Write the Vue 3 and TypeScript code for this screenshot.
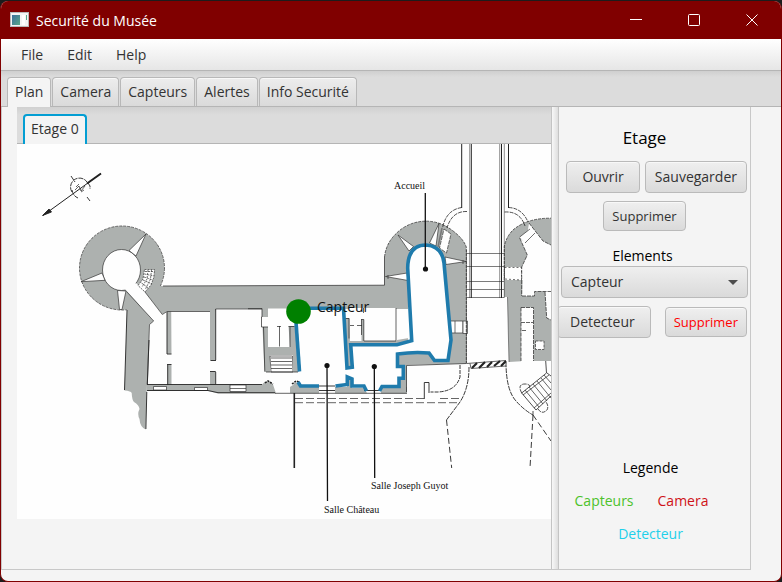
<script setup lang="ts">
import { ref } from 'vue'

const menus: string[] = ['File', 'Edit', 'Help']
const tabs: string[] = ['Plan', 'Camera', 'Capteurs', 'Alertes', 'Info Securité']
const activeTab = ref<string>('Plan')
const elements: string[] = ['Capteur', 'Camera', 'Detecteur']
const element = ref<string>('Capteur')
const passageSteps: number[] = [253, 266, 281, 289, 297]
</script>

<template>
  <div class="frame">
    <div class="window">
      <header class="titlebar">
        <svg class="app-icon" viewBox="0 0 19 16" aria-hidden="true">
          <defs>
            <linearGradient id="appIcon" x1="0" y1="0" x2="1" y2="1">
              <stop offset="0" stop-color="#3d6f9c" />
              <stop offset="1" stop-color="#57a888" />
            </linearGradient>
          </defs>
          <rect x="0.5" y="0.5" width="18" height="14" fill="#f4f4f4" stroke="#b9b9b9" />
          <rect x="2" y="3" width="8" height="10" fill="url(#appIcon)" />
          <rect x="12" y="3" width="3" height="10" fill="#fff" />
          <path d="M16 3h1v5h-1z" fill="#57a888" />
        </svg>
        <h1>Securité du Musée</h1>
        <button class="win-btn" aria-label="Réduire">
          <svg viewBox="0 0 14 14"><path d="M1 6.500h12" /></svg>
        </button>
        <button class="win-btn" aria-label="Agrandir">
          <svg viewBox="0 0 14 14"><rect x="1.500" y="1.500" width="11" height="11" rx="1" /></svg>
        </button>
        <button class="win-btn" aria-label="Fermer">
          <svg viewBox="0 0 14 14"><path d="M1.500 1.500l11 11M12.500 1.500l-11 11" /></svg>
        </button>
      </header>

      <nav class="menubar">
        <button v-for="m in menus" :key="m" class="menu">{{ m }}</button>
      </nav>

      <div class="tabs" role="tablist">
        <button
          v-for="t in tabs"
          :key="t"
          role="tab"
          class="tab"
          :class="{ active: t === activeTab }"
          :aria-selected="t === activeTab"
          @click="activeTab = t"
        >{{ t }}</button>
      </div>

      <main class="content">
        <div class="split">
          <section class="plan-pane">
            <div class="floors" role="tablist">
              <button role="tab" class="floor" aria-selected="true">Etage 0</button>
            </div>
            <svg class="plan" viewBox="17 144 534 375" role="img" aria-label="Plan Etage 0">
              <rect x="17" y="144" width="534" height="375" fill="#fefefe" />

              <!-- compass -->
              <g class="ink">
                <path d="M101 173.500L43 215.500" stroke-width="1" />
                <path d="M101 173.500L87 183.500" stroke-width="2" />
                <path d="M42.500 215.500L49 209L51.500 212z" fill="#222" />
                <path d="M72 192a9 9 0 0 1 2-12a9 9 0 0 1 13 2M72 190q1 6 6 8M71 176l4 6M87 197l3 4M88 183l2 3v3" stroke-dasharray="5 1" />
                <path d="M75 190l4-4l2 5l4-5M76 187l3-3M81 192l3-2" stroke-width="0.700" />
              </g>

              <!-- masonry -->
              <g class="wall">
                <ellipse cx="122" cy="268" rx="42.500" ry="42" stroke-dasharray="3 1" />
                <path class="plain" d="M127 290L127 310L124.500 390.500Q131 391 131.700 393Q132 400 134 402Q139 405 139.500 409Q137 414 139.500 419Q140 427 145.700 429.500L147 384L149.500 324.500L154 321L126 290z" />
                <path class="plain" d="M163 286L384.500 285.200V257Q386 243 396.700 233A42 42 0 0 1 451.700 230Q463 238 466.300 247V363.500L406.500 365V393.300H381V385H399V378H403V366H397V340L409 338V309H215.700V311.500H167L162.300 314.500L140 286z" />
                <path class="plain" d="M167 311h4.300l.4 42.700h-4.700zM167.700 364.700h4V385h-4zM210 309h5.700v51.300h-5.700zM210 371.500h5.700V385h-5.700z" />
                <path class="plain" d="M147 384.500H262l3-3h5l3 3l3 9H218l-10-2.500H147z" />
                <path class="plain" d="M290 393V387l3-2l2-3l5 2l2 2H319V393.300zM335 387h29l3 6.300h-32zM381 387h26v6.300h-26z" />
                <path class="plain" d="M262 308h6v9h-6zM262.500 327h6l1 20h22l-1.500-21h5.500l3 46h-4.800v-17H270v17h-5.500z" />
                <path class="plain" d="M504.300 280V246.700Q506 237 513 230Q527 218 551 218.200V245L543 241L529 223L526 243L519.700 238L527.300 255L521.700 267H504.300z" />
                <path class="plain" d="M504 280H522.500L522 296H534.500L535 291.500H545L546.700 318L551 320V361H533.500V307.500H521V361.300L509 362L507.500 297H504z" />
              </g>

              <!-- rooms, openings and windows -->
              <g class="opening">
                <ellipse cx="121.500" cy="270" rx="19" ry="20.500" />
                <path d="M146 234L129 250.500L136 256z" />
                <path d="M81 281.700L102 273L105 280.300z" />
                <path d="M117.500 290.500L119.500 309.500H122L126 291z" />
                <path class="bare" d="M125 289L136 283L145 292L162.300 314.500L167 311.500V384.500H147.500L149.500 324.500L153.700 321z" />
                <path class="bare" d="M171.700 312H210V384.500H171.700zM215.700 309.300H262V384H215.700z" />
                <path class="bare" d="M268 308.500H343L346 340L348 385H300V372L296 324L294 326H290V347H268zM349.500 308H396V341H364V319H361.500V341H350zM297 372L346 369V376L298 382z" />
                <path d="M126.500 291.500L153.700 321L149.500 324.500L147.300 384.500M145 292L162.300 314.500L167 311.500H210M215.700 309H262" fill="none" />
                <path d="M144.500 269.500H154.500L154 277L151 285L145 292L138 285.500L143 279z" stroke-dasharray="2 1" />
                <path d="M141.500 283l7 5M143 280l9 4M144 277l9 3M144.500 274l9.500 2M145 271.500h9.500" stroke-dasharray="2 1" />
                <path d="M148 270l-1 9l-5 8M151.500 270l-1 9l-5 10" fill="none" stroke="#777" stroke-dasharray="2 1" />
                <path d="M153.500 386.500h13v3.500h-13zM194.500 387.500h13v3h-13zM230 385h16v6.500h-16zM230 388.500h16" />
                <path class="bare" d="M262 317h6v10h-6z" />
                <path d="M270 356h22.500l.5 16h-22z" />
                <path d="M398 235L413.500 246.500L409 251z" />
                <path d="M385.500 276.500L407 273L408 280.500zM388 275v4" />
                <path d="M466 261.500L445 257L446 264.500zM463 260v4" />
                <path d="M439 223.500L429.500 243L436 246z" />
                <path d="M444 229L451 234L446.500 253L439.500 248z" stroke-dasharray="4 1" />
                <path d="M450 321H463V333H450zM455 321v12" />
                <path d="M463 321h4.500v12.500h-4.500z" />
                <path class="bare" d="M519.700 237L530 229L535 233L525 243z" />
                <path d="M519.700 237L530 229M525 243L535 233" fill="none" />
                <path d="M504.500 267.500H521.500V280L504.500 279z" stroke-dasharray="2 2" />
                <path d="M535.500 341h8.500v8.500h-8.500z" stroke-dasharray="3 1" />
                <path class="bare" d="M392 346L412 341V352L398 354V385L381 388H352L350 346zM349 369l4-1v11l-4-2z" />
                <path class="bare" d="M408 335V265Q410 247 426 245Q441 246 444 262L451 340L448 360H434L428 352H408z" />
              </g>

              <!-- partitions standing inside the rooms -->
              <g class="wall">
                <path class="plain" d="M345 318h4.500l.5 26l3 23.500l-6 .5zM361.500 319.500h2.300V341H398v2.500h-48V341h11.500zM347 377l5 2v8h-5z" />
                <path class="plain" d="M288.500 326h6l3 46h-4.500v-17l-23-.5V347h20z" />
              </g>

              <!-- fine line work -->
              <g class="ink">
                <path d="M127 310L124.500 390M149 340L147.300 384.500M146.800 392L145.900 429M167 312v42h4.500M167 364.500h4.500M167.700 365v20M210.500 360.500h5.500M210 371.500h5.700M215.700 309v51M215.700 372v12M147 390.500H208L218 392.700H275M147 384.500H262" />
                <path d="M163 286L384.500 285.200V257M248 308.700H262M275 393.300H407M406.500 392V365.500L466.500 363.500" stroke-width="0.700" />
                <path d="M384.500 257Q386 243 396.700 233A42 42 0 0 1 451.700 230Q463 238 466.300 247V363M504.300 280V246.700Q506 237 513 230Q527 218 551 218.200" stroke-dasharray="3 1" stroke-width="0.700" />
                <path d="M262 308.500V317H261.500V327H268M263.500 327L264.800 371.500M266 372H298M279.500 326v20.500M277 326.500h4M288.500 326.500h6M290 327v20M271 358h21M271 361.500h21M271 365h21M271 368.500h21" stroke-width="0.700" />
                <path d="M265 383l3-2l5 3M292 384l4-3l3 1" stroke-width="1.500" stroke-dasharray="2 1" />
                <path d="M345 318.500h4v20M361.500 319.500h2.300V341M350 325.500h4M357 325.500h5M361.500 335V319M396 308v33H364M363.500 308v5" stroke-width="0.700" />
                <path d="M319 386h16M319 390.500h16M364 390.500h17" />
                <path d="M461.700 144V208M508.500 144V208M501.500 144V298M471.300 144V298" stroke-width="1" />
                <path d="M469.700 144V298M499.700 144V298M504.300 144V298M466.500 250V363M507.500 297L509 362" stroke-width="0.500" />
                <path v-for="y in passageSteps" :key="y" :d="`M467 ${y}.500H504`" stroke-width="0.600" />
                <path d="M461.700 207.500Q446 210 442.500 228M467 211.500Q452 211 447 228M508.500 207.500Q522 208 528 222M504.500 212Q520 211 525 226" stroke-dasharray="4 1" stroke-width="0.800" />
                <path d="M442 228L438 247" stroke="#777" stroke-width="1.500" />
                <path d="M529 223L543 241L551 245M519.700 238L527.300 255L521.700 267V296M522 296H534.500V291.500H551M545 292L546.700 318L551 320M521 307.500h12.500V361M521 307.500V361M521 322.500h12M522 330.500h5" stroke-width="0.700" stroke-dasharray="4 1" />
                <path d="M466.500 363.500L506 360.500M470 363.500L471 368.500L506 366" stroke-width="0.700" />
                <path d="M472 368l5-5M479 368l6-6M487 367l5-5M494 366l6-5M501 366l5-5" stroke-width="2.200" />
                <path d="M469 367Q469 388 460 402L446.500 420" stroke-dasharray="5 1" />
                <path d="M446.500 420L451.700 468M533 415L530 468M533 415L551 441" stroke-dasharray="6 3" />
                <path d="M506 362Q506 390 516 401Q524 410 533 415" stroke-dasharray="5 1" />
                <path d="M460 365V377Q456 391 438 392H430.500" stroke-dasharray="4 1" />
                <path d="M424.300 399V382.500H429V393" />
                <path d="M295 398.500H425M440 398.500H460M295 402.700H460" stroke-width="0.700" stroke-dasharray="8 3" />
                <path d="M545.700 361L546.500 373L521.700 393L536 410L551 396M533 415V411M551 376l-4-3" stroke-width="0.800" />
                <path d="M525 390l14 17M529 387l14 17M533 384l14 17M537 381l14 17M541 378l10 12M544 375l7 8M523 395l26-20M534 408l17-15" stroke-width="0.700" />
                <path d="M521.700 393Q517 384 525 384Q530 384 530 387M538 409Q542 415 547 410Q549 406 546 402" stroke-width="0.800" stroke-dasharray="4 1" />
                <path d="M294.300 393V468" stroke-width="1.600" />
              </g>

              <!-- visitor area outline -->
              <g class="zone">
                <path d="M296 322L299.500 371.500" />
                <path d="M308 308.300H343.500L347 368L352.300 367.300L350.700 344.700H397L411.700 340.700L407.700 268Q408 245 426 245Q442 246 444 263L451 340L448 360.500H434.500L429 353Q414 351.500 397.500 354V366.500H403.300V378.300H399V386.500H382L379.500 391" />
                <path d="M298 382L300.500 386H319M335.500 386L347.300 384.500V377L352 379V386H364L366.500 391" />
              </g>

              <!-- room callouts -->
              <g class="callout">
                <path d="M425.300 193V269M327 365.500L327.500 501M374.300 366.500L374.700 478" />
                <circle cx="425.500" cy="269" r="2.600" />
                <circle cx="327" cy="365.500" r="2.600" />
                <circle cx="374.300" cy="366.500" r="2.600" />
                <text x="394" y="189">Accueil</text>
                <text x="371" y="489">Salle Joseph Guyot</text>
                <text x="324" y="513">Salle Château</text>
              </g>

              <!-- placed sensor -->
              <g class="sensor">
                <circle cx="298.500" cy="311.500" r="12.300" />
                <text x="317" y="312">Capteur</text>
              </g>
            </svg>
          </section>

          <div class="divider" role="separator" aria-orientation="vertical"></div>

          <aside class="side">
            <h2>Etage</h2>
            <div class="row files">
              <button class="btn wide">Ouvrir</button>
              <button class="btn">Sauvegarder</button>
            </div>
            <div class="row remove">
              <button class="btn small">Supprimer</button>
            </div>
            <label class="caption" for="element">Elements</label>
            <div class="combo">
              <select id="element" v-model="element">
                <option v-for="e in elements" :key="e" :value="e">{{ e }}</option>
              </select>
              <svg class="arrow" viewBox="0 0 10 5" aria-hidden="true"><path d="M0 0h10L5 5z" /></svg>
            </div>
            <div class="row actions">
              <button class="btn detector">Detecteur</button>
              <button class="btn small danger">Supprimer</button>
            </div>
            <div class="legend">
              <h3>Legende</h3>
              <div class="legend-row">
                <span class="green">Capteurs</span>
                <span class="red">Camera</span>
              </div>
              <span class="cyan">Detecteur</span>
            </div>
          </aside>
        </div>
      </main>
    </div>
  </div>
</template>

<style>
body {
  margin: 0;
  background: #1c1c1c;
}
</style>

<style scoped>
.frame {
  box-sizing: border-box;
  height: 100vh;
  min-height: 560px;
  padding-top: 1px;
  font: 14px/20px "Open Sans", "Noto Sans", sans-serif;
  color: #333;
}
.window {
  box-sizing: border-box;
  height: 100%;
  display: flex;
  flex-direction: column;
  background: #f4f4f4;
  border: 1px solid #800000;
  border-top: 0;
  border-radius: 8px;
  overflow: hidden;
}
button,
select {
  font: inherit;
  color: inherit;
  margin: 0;
}
h1,
h2,
h3 {
  margin: 0;
  font-weight: 400;
}
.titlebar {
  flex: none;
  display: flex;
  align-items: center;
  height: 38px;
  padding-left: 9px;
  background: #800000;
  color: #fff;
}
.app-icon {
  width: 19px;
  height: 16px;
  margin-right: 7px;
}
.titlebar h1 {
  flex: 1;
  font-size: 14px;
  line-height: 20px;
  padding-top: 1px;
}
.win-btn {
  width: 58px;
  height: 38px;
  padding: 0;
  border: 0;
  background: none;
}
.win-btn svg {
  display: block;
  width: 14px;
  height: 14px;
  margin: 0 auto;
  fill: none;
  stroke: #fff;
}
.menubar {
  flex: none;
  display: flex;
  height: 31px;
  padding: 0 8px;
  background: linear-gradient(#fff, #e6e6e6);
  border-bottom: 1px solid #b5b5b5;
}
.menu {
  padding: 0 12px;
  border: 0;
  background: none;
}
.tabs {
  flex: none;
  display: flex;
  align-items: flex-end;
  gap: 1px;
  height: 35px;
  padding: 0 6px;
  background: linear-gradient(#cfcfcf, #dcdcdc 6px);
  border-bottom: 1px solid #b5b5b5;
}
.tab {
  height: 29px;
  padding: 0 7px;
  border: 1px solid #b8b8b8;
  border-bottom: 0;
  border-radius: 4px 4px 0 0;
  background: linear-gradient(#ededed, #dadada);
  box-shadow: inset 0 1px #f8f8f8;
}
.tab.active {
  height: 30px;
  margin-bottom: -1px;
  padding-bottom: 2px;
  background: #f4f4f4;
}
.content {
  flex: 1;
  min-height: 0;
  display: flex;
  padding: 0 30px 11px 0;
}
.split {
  flex: 1;
  min-width: 0;
  display: flex;
  border: 1px solid #c8c8c8;
  border-top: 0;
}
.plan-pane {
  flex: 1;
  min-width: 0;
  padding-left: 15px;
}
.floors {
  display: flex;
  align-items: flex-end;
  height: 36px;
  padding-left: 6px;
  background: linear-gradient(#d0d0d0, #dcdcdc 8px);
  border-bottom: 1px solid #b5b5b5;
}
.floor {
  height: 30px;
  margin-bottom: -1px;
  padding: 0 6px 2px;
  border: 2px solid #039ed3;
  border-bottom: 0;
  border-radius: 4px 4px 0 0;
  background: #f4f4f4;
}
.plan {
  display: block;
  width: 100%;
  height: auto;
}
.divider {
  flex: none;
  box-sizing: border-box;
  width: 8px;
  border: solid #c4c4c4;
  border-width: 0 1px;
  background: linear-gradient(90deg, #f8f8f8, #dedede);
  cursor: col-resize;
}
.side {
  flex: none;
  width: 191px;
  box-sizing: border-box;
  display: flex;
  flex-direction: column;
  padding: 19px 2px 25px 2px;
  overflow: hidden;
}
.side h2 {
  padding-right: 20px;
  font-size: 17px;
  line-height: 24px;
  text-align: center;
  color: #000;
}
.row {
  display: flex;
}
.btn {
  height: 32px;
  padding: 0 9px;
  border: 1px solid #bababa;
  border-radius: 4px;
  background: linear-gradient(#efefef, #dadada);
  box-shadow: inset 0 1px #f8f8f8;
}
.btn.wide {
  padding: 0 15px;
}
.btn.small {
  height: 30px;
  padding: 0 8px;
  font-size: 13px;
}
.btn.danger {
  color: #f00;
}
.files {
  justify-content: flex-end;
  gap: 5px;
  padding-top: 11px;
  padding-right: 1px;
}
.remove {
  justify-content: center;
  padding: 8px 20px 0 0;
}
.caption {
  padding: 16px 24px 0 0;
  line-height: 18px;
  text-align: center;
  color: #000;
}
.combo {
  position: relative;
  padding-top: 1px;
}
.combo select {
  display: block;
  width: 100%;
  height: 32px;
  padding: 0 9px;
  appearance: none;
  border: 1px solid #bababa;
  border-radius: 4px;
  background: linear-gradient(#efefef, #dadada);
}
.arrow {
  position: absolute;
  right: 10px;
  top: 15px;
  width: 10px;
  height: 5px;
  fill: #4d4d4d;
  pointer-events: none;
}
.actions {
  justify-content: space-between;
  align-items: center;
  padding-top: 8px;
  padding-right: 1px;
  margin-left: -4px;
}
.btn.detector {
  padding: 0 15px 0 12px;
}
.legend {
  margin-top: auto;
  padding-right: 8px;
  display: flex;
  flex-direction: column;
  align-items: center;
  gap: 13px;
  color: #000;
}
.legend h3 {
  font-size: 14px;
  line-height: 20px;
}
.legend-row {
  display: flex;
  gap: 24px;
  padding-right: 18px;
}
.green {
  color: #4cc22b;
}
.red {
  color: #cf1218;
}
.cyan {
  color: #1fd0ea;
}
.wall path,
.wall ellipse {
  fill: #adb1af;
  stroke: #333;
  stroke-width: 0.7;
}
.wall .plain {
  stroke: none;
}
.opening path,
.opening ellipse {
  fill: #fefefe;
  stroke: #333;
  stroke-width: 0.7;
}
.opening path[fill="none"] {
  fill: none;
}
.opening .bare {
  stroke: none;
}
.ink {
  fill: none;
  stroke: #222;
  stroke-width: 0.9;
}
.zone {
  fill: none;
  stroke: #1f7bac;
  stroke-width: 3.6;
}
.callout {
  font: 10px "Liberation Serif", serif;
  fill: #111;
}
.callout path {
  stroke: #111;
  stroke-width: 1.3;
}
.sensor {
  font-size: 14px;
  fill: #111;
}
.sensor circle {
  fill: #008000;
}
</style>
